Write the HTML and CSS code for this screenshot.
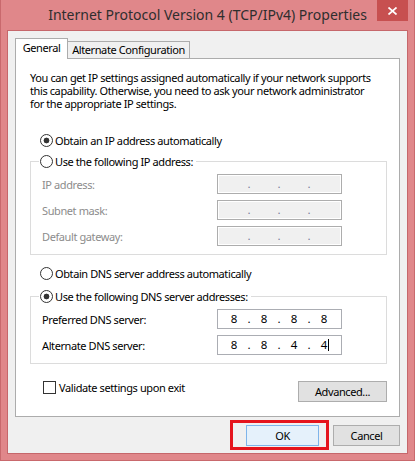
FILE: index.html
```html
<!DOCTYPE html>
<html lang="en">
<head>
<meta charset="utf-8">
<title>Internet Protocol Version 4 (TCP/IPv4) Properties</title>
<link rel="stylesheet" href="styles.css">
</head>
<body>
<div class="window">
  <div class="titlebar">
    <span class="spacer"></span>
    <div class="title">Internet Protocol Version 4 (TCP/IPv4) Properties</div>
    <div class="controls">
      <button class="close" aria-label="Close">
        <svg width="9" height="8" viewBox="0 0 9 8"><path d="M0.5 0.5 L8.5 7.5 M8.5 0.5 L0.5 7.5" stroke="#fff" stroke-width="1.7" fill="none"/></svg>
      </button>
    </div>
  </div>

  <div class="client">
    <div class="tabs">
      <div class="tab active">General</div>
      <div class="tab">Alternate Configuration</div>
    </div>

    <div class="panel">
      <p class="intro">You can get IP settings assigned automatically if your network supports<br>this capability. Otherwise, you need to ask your network administrator<br>for the appropriate IP settings.</p>

      <div class="option option-ip-auto"><span class="radio checked"></span><span>Obtain an IP address automatically</span></div>

      <fieldset class="group group-ip">
        <legend><span class="radio"></span><span>Use the following IP address:</span></legend>
        <div class="field-row disabled">
          <span class="label">IP address:</span>
          <div class="ipbox"><span></span><span class="dot">.</span><span></span><span class="dot">.</span><span></span><span class="dot">.</span><span></span></div>
        </div>
        <div class="field-row disabled">
          <span class="label">Subnet mask:</span>
          <div class="ipbox"><span></span><span class="dot">.</span><span></span><span class="dot">.</span><span></span><span class="dot">.</span><span></span></div>
        </div>
        <div class="field-row disabled">
          <span class="label">Default gateway:</span>
          <div class="ipbox"><span></span><span class="dot">.</span><span></span><span class="dot">.</span><span></span><span class="dot">.</span><span></span></div>
        </div>
      </fieldset>

      <div class="option option-dns-auto"><span class="radio"></span><span>Obtain DNS server address automatically</span></div>

      <fieldset class="group group-dns">
        <legend><span class="radio checked"></span><span>Use the following DNS server addresses:</span></legend>
        <div class="field-row">
          <span class="label">Preferred DNS server:</span>
          <div class="ipbox"><span>8</span><span class="dot">.</span><span>8</span><span class="dot">.</span><span>8</span><span class="dot">.</span><span>8</span></div>
        </div>
        <div class="field-row">
          <span class="label">Alternate DNS server:</span>
          <div class="ipbox"><span>8</span><span class="dot">.</span><span>8</span><span class="dot">.</span><span>4</span><span class="dot">.</span><span class="octet-caret">4<i class="caret"></i></span></div>
        </div>
      </fieldset>

      <div class="footer-row">
        <div class="check-option"><span class="checkbox"></span><span>Validate settings upon exit</span></div>
        <button class="btn btn-advanced">Advanced...</button>
      </div>
    </div>

    <div class="buttons">
      <div class="ok-wrap">
        <button class="btn btn-ok">OK</button>
        <span class="highlight"></span>
      </div>
      <button class="btn btn-cancel">Cancel</button>
    </div>
  </div>
</div>
</body>
</html>
```

FILE: styles.css
```css
* {
  box-sizing: border-box;
}

html,
body {
  margin: 0;
  padding: 0;
}

body {
  width: 415px;
  height: 461px;
  overflow: hidden;
  background: #e0878a;
  font-family: "Noto Sans", "Open Sans", sans-serif;
  font-size: 11px;
  letter-spacing: -0.4px;
  color: #000;
}

/* window frame */
.window {
  width: 415px;
  height: 461px;
  display: flex;
  flex-direction: column;
  background: #e0878a;
  border: 1px solid #c9696d;
  border-top: none;
}

.titlebar {
  height: 30px;
  flex: none;
  display: grid;
  grid-template-columns: 1fr auto 1fr;
  align-items: start;
}

.title {
  padding-top: 5px;
  line-height: 20px;
  font-size: 14px;
  letter-spacing: 0;
  color: #2e2e2e;
  white-space: nowrap;
}

.controls {
  justify-self: end;
  margin-right: 6px;
}

.close {
  display: flex;
  align-items: center;
  justify-content: center;
  width: 31px;
  height: 21px;
  padding: 0;
  border: none;
  background: #c75050;
}

/* client area */
.client {
  flex: 1;
  margin: 0 6px 6px 6px;
  padding: 7px;
  background: #f0f0f0;
  border: 1px solid #c6676b;
  display: flex;
  flex-direction: column;
}

.tabs {
  height: 20px;
  display: flex;
  align-items: flex-end;
}

.tab {
  border: 1px solid #acacac;
  border-bottom: none;
  text-align: center;
  white-space: nowrap;
}

.tab.active {
  position: relative;
  z-index: 1;
  width: 53px;
  height: 21px;
  margin-bottom: -1px;
  line-height: 18px;
  background: #fff;
}

.tab:not(.active) {
  width: 123px;
  height: 17px;
  margin-left: -1px;
  line-height: 15px;
  background: #f0f0f0;
}

.panel {
  background: #fff;
  border: 1px solid #acacac;
  padding: 12px 12px 14px 14px;
  display: flex;
  flex-direction: column;
}

.intro {
  margin: 0;
  line-height: 13px;
  white-space: nowrap;
}

/* radio buttons and check box */
.option {
  display: flex;
  align-items: center;
  height: 16px;
  margin-left: 10px;
  white-space: nowrap;
}

.option-ip-auto {
  margin-top: 22px;
}

.option-dns-auto {
  margin-top: 10px;
}

.radio {
  flex: none;
  width: 13px;
  height: 13px;
  margin-right: 2px;
  border: 1px solid #333;
  border-radius: 50%;
  background: #fff;
}

.radio.checked {
  background: radial-gradient(circle, #333 0 2.6px, #fff 3.2px);
}

.checkbox {
  flex: none;
  width: 13px;
  height: 13px;
  margin-right: 3px;
  border: 1px solid #333;
  background: #fff;
}

/* group boxes */
.group {
  margin: 0;
  min-width: 0;
  padding: 5px 0 8px 11px;
  border: 1px solid #dcdcdc;
}

.group-ip {
  margin-top: 6px;
}

.group-dns {
  margin-top: 8px;
}

.group legend {
  display: flex;
  align-items: center;
  height: 15px;
  margin-left: -3px;
  padding: 0 3px 0 1px;
  white-space: nowrap;
}

.field-row {
  display: flex;
  align-items: center;
  height: 20px;
}

.field-row + .field-row {
  margin-top: 6px;
}

.label {
  width: 175px;
  flex: none;
  white-space: nowrap;
}

.field-row.disabled .label {
  color: #8c8c8c;
}

.ipbox {
  width: 125px;
  height: 20px;
  padding-left: 3px;
  border: 1px solid #abadb3;
  background: #fff;
  display: grid;
  grid-template-columns: 26px 4px 26px 4px 26px 4px 26px;
  align-items: center;
  font-size: 11.5px;
  letter-spacing: 0;
  line-height: 18px;
  text-align: center;
}

.field-row.disabled .ipbox {
  border-color: #adadad;
  background: #f0f0f0;
  box-shadow: inset 0 0 0 1px #fff;
  color: #7a7a9a;
}

.octet-caret {
  position: relative;
}

.caret {
  position: absolute;
  left: 17px;
  top: 3px;
  width: 1px;
  height: 12px;
  background: #000;
}

/* bottom of the General tab */
.footer-row {
  margin-top: 17px;
  display: flex;
  justify-content: space-between;
  align-items: flex-start;
}

.check-option {
  display: flex;
  align-items: center;
  height: 13px;
  margin-left: 13px;
  white-space: nowrap;
}

.btn {
  height: 21px;
  padding: 0;
  border: 1px solid #adadad;
  background: #e1e1e1;
  font: inherit;
  letter-spacing: inherit;
  color: #000;
  line-height: 19px;
  text-align: center;
}

.btn-advanced {
  width: 89px;
}

/* dialog buttons */
.buttons {
  margin-top: 8px;
  display: flex;
  justify-content: flex-end;
  gap: 14px;
}

.ok-wrap {
  position: relative;
}

.btn-ok {
  width: 73px;
  border-color: #7eb4ea;
  background: #e5f1fb;
}

.btn-cancel {
  width: 67px;
}

.highlight {
  position: absolute;
  left: -16px;
  top: -5px;
  width: 99px;
  height: 30px;
  border: 3px solid #e5141c;
  pointer-events: none;
}
```
